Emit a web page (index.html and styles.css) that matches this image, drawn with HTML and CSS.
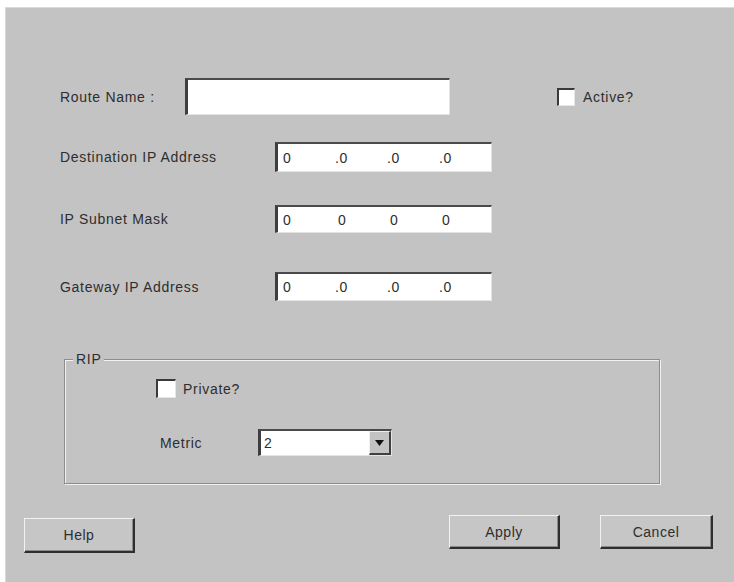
FILE: index.html
```html
<!DOCTYPE html>
<html lang="en">
<head>
<meta charset="utf-8">
<title>Route</title>
<link rel="stylesheet" href="styles.css">
</head>
<body>
<div class="dialog">
  <div class="form">
    <div class="row row-route">
      <span class="label label-route">Route Name :</span>
      <div class="field field-route"></div>
      <label class="check check-active"><span class="box"></span><span class="check-text">Active?</span></label>
    </div>
    <div class="row row-ip row-dest">
      <span class="label label-ip">Destination IP Address</span>
      <div class="field field-ip"><span class="oct first">0</span><span class="oct">.0</span><span class="oct">.0</span><span class="oct">.0</span></div>
    </div>
    <div class="row row-ip row-mask">
      <span class="label label-ip">IP Subnet Mask</span>
      <div class="field field-ip"><span class="oct first">0</span><span class="oct nodot">0</span><span class="oct nodot">0</span><span class="oct nodot">0</span></div>
    </div>
    <div class="row row-ip row-gw">
      <span class="label label-ip">Gateway IP Address</span>
      <div class="field field-ip"><span class="oct first">0</span><span class="oct">.0</span><span class="oct">.0</span><span class="oct">.0</span></div>
    </div>
    <div class="group">
      <span class="group-title">RIP</span>
      <label class="check check-private"><span class="box"></span><span class="check-text">Private?</span></label>
      <div class="metric-row">
        <span class="label label-metric">Metric</span>
        <div class="select">
          <span class="select-value">2</span>
          <span class="select-btn"><svg width="9" height="6" viewBox="0 0 9 6"><path d="M0 0H9L4.5 6Z" fill="#111"/></svg></span>
        </div>
      </div>
    </div>
  </div>
  <div class="buttons">
    <button class="btn btn-help">Help</button>
    <button class="btn btn-apply">Apply</button>
    <button class="btn btn-cancel">Cancel</button>
  </div>
</div>
</body>
</html>
```
FILE: styles.css
```css
html, body {
  margin: 0;
  padding: 0;
  background: #ffffff;
  overflow: hidden;
}
body {
  font-family: "Liberation Sans", Arial, sans-serif;
  font-size: 14px;
  color: #2e2e2e;
  letter-spacing: 0.7px;
}
.dialog {
  margin: 7px 0 0 5px;
  width: 729px;
  height: 575px;
  background: #c3c3c3;
  box-shadow: inset 1px 1px 0 #dadada;
}
.form {
  padding: 71px 0 0 55px;
}
.row {
  display: flex;
  align-items: center;
}
.row-route { height: 37px; }
.label-route { width: 125px; flex: none; }
.label-ip { width: 215px; flex: none; }
.field {
  box-sizing: border-box;
  background: #ffffff;
  border-top: 2px solid #4a4a4a;
  border-left: 3px solid #3e3e3e;
  border-right: 1px solid #e4e4e4;
  border-bottom: 1px solid #e4e4e4;
  flex: none;
}
.field-route {
  width: 265px;
  height: 37px;
}
.field-ip {
  width: 217px;
  display: flex;
  align-items: center;
  padding-left: 5px;
}
.row-dest { margin-top: 27px; }
.row-dest .field-ip { height: 30px; }
.row-mask { margin-top: 33px; }
.row-mask .field-ip { height: 28px; }
.row-gw { margin-top: 39px; }
.row-gw .field-ip { height: 29px; }
.oct { width: 52px; flex: none; }
.oct.nodot { padding-left: 3px; width: 49px; }

.check {
  display: flex;
  align-items: center;
}
.check-active { margin-left: 107px; }
.box {
  box-sizing: border-box;
  width: 18px;
  height: 18px;
  background: #ffffff;
  border-top: 2px solid #3a3a3a;
  border-left: 2px solid #3a3a3a;
  border-right: 1px solid #e6e6e6;
  border-bottom: 1px solid #e6e6e6;
  flex: none;
}
.check-text { margin-left: 8px; }

.group {
  box-sizing: border-box;
  margin: 58px 0 0 4px;
  width: 596px;
  height: 125px;
  border: 1px solid #8c8c8c;
  box-shadow: 1px 1px 0 #f2f2f2, inset 1px 1px 0 #f2f2f2;
}
.group-title {
  display: block;
  width: max-content;
  margin: -9px 0 0 8px;
  padding: 0 3px;
  line-height: 16px;
  background: #c3c3c3;
}
.check-private {
  margin: 12px 0 0 91px;
  width: max-content;
}
.check-private .box { width: 20px; height: 19px; }
.check-private .check-text { margin-left: 7px; }
.metric-row {
  display: flex;
  align-items: center;
  margin: 31px 0 0 95px;
}
.label-metric { width: 98px; flex: none; }
.select {
  box-sizing: border-box;
  width: 134px;
  height: 27px;
  background: #ffffff;
  border-top: 2px solid #4a4a4a;
  border-left: 3px solid #3e3e3e;
  border-right: 1px solid #e4e4e4;
  border-bottom: 1px solid #e4e4e4;
  display: flex;
  align-items: center;
  justify-content: space-between;
}
.select-value { padding-left: 3px; }
.select-btn {
  box-sizing: border-box;
  width: 22px;
  height: 24px;
  background: #c3c3c3;
  border-top: 1px solid #efefef;
  border-left: 1px solid #efefef;
  border-right: 2px solid #404040;
  border-bottom: 2px solid #404040;
  display: flex;
  align-items: center;
  justify-content: center;
}

.buttons {
  display: flex;
  align-items: flex-start;
  margin-top: 31px;
  padding-left: 19px;
}
.btn {
  box-sizing: border-box;
  font-family: "Liberation Sans", Arial, sans-serif;
  font-size: 14px;
  letter-spacing: 0.5px;
  color: #2e2e2e;
  background: #c6c6c6;
  border-top: 1px solid #f2f2f2;
  border-left: 1px solid #f2f2f2;
  border-right: 2px solid #2e2e2e;
  border-bottom: 2px solid #2e2e2e;
  box-shadow: inset -1px -1px 0 #8a8a8a;
  padding: 0;
  height: 34px;
  flex: none;
}
.btn-help { width: 111px; height: 35px; margin-top: 3px; }
.btn-apply { width: 111px; margin-left: 314px; }
.btn-cancel { width: 113px; margin-left: 40px; }
```
